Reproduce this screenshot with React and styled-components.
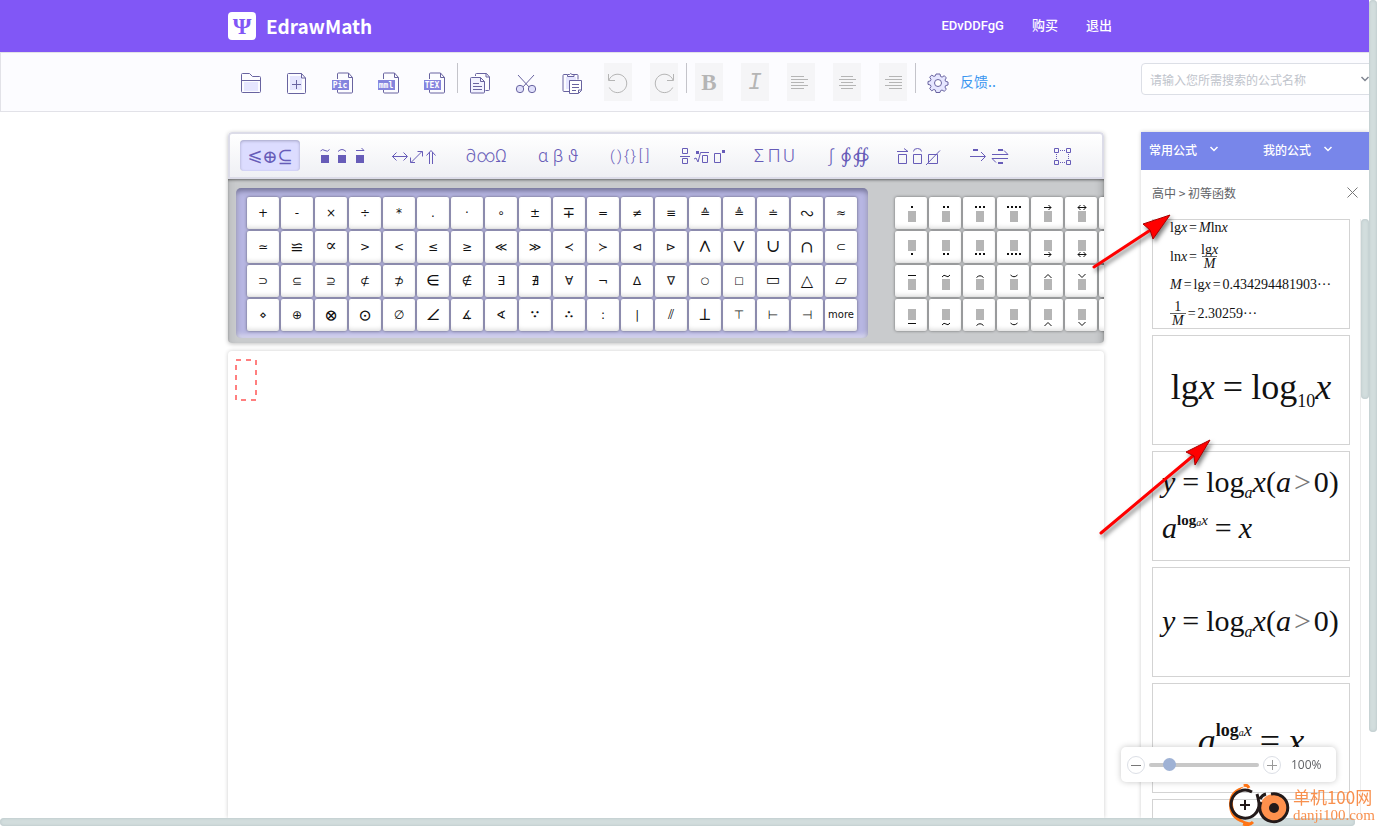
import React, { useState } from "react";
import styled, { createGlobalStyle, css } from "styled-components";

const GlobalStyle = createGlobalStyle`
  * {
    box-sizing: border-box;
  }
  body {
    margin: 0;
    background: #fff;
    color: #606266;
    font-family: "Noto Sans CJK SC", sans-serif;
    font-size: 12px;
  }
  button {
    margin: 0;
    padding: 0;
    border: none;
    background: none;
    font: inherit;
    color: inherit;
    cursor: pointer;
  }
  svg {
    display: block;
    flex: none;
  }
`;

const Frame = styled.div`
  position: relative;
  display: grid;
  grid-template-columns: minmax(0, 1fr) 8px;
  grid-template-rows: minmax(0, 1fr) 8px;
  height: 100vh;
  overflow: hidden;
`;

const Page = styled.div`
  display: flex;
  flex-direction: column;
  overflow: hidden;
`;

const ScrollThumb = styled.div`
  border-radius: 4px;
  background: #d2dddd;
  box-shadow: inset 0 0 3px #b4c0c4;
  width: ${({ $width }) => $width || "8px"};
  height: ${({ $height }) => $height || "8px"};
`;

const Header = styled.header`
  display: flex;
  align-items: center;
  flex: none;
  height: 52px;
  padding: 0 257px 0 228px;
  background: #8157f6;
  color: #fff;
`;

const Logo = styled.div`
  display: flex;
  align-items: center;
  gap: 10px;
  font-size: 19px;
  font-weight: 700;
  line-height: 28px;

  span {
    width: 28px;
    height: 28px;
    border-radius: 4px;
    background: #fff;
    color: #8157f6;
    font-family: "Liberation Serif", serif;
    font-size: 24px;
    text-align: center;
  }
`;

const Nav = styled.nav`
  display: flex;
  gap: 28px;
  margin-left: auto;

  a {
    color: #fff;
    font-family: Roboto, "Noto Sans CJK SC", sans-serif;
    font-size: 13px;
    font-weight: 500;
    line-height: 20px;
    text-decoration: none;
  }
`;

const columns = css`
  display: grid;
  grid-template-columns: minmax(0, 1fr) 228px;
  column-gap: 37px;
`;

const Toolbar = styled.div`
  ${columns}
  flex: none;
  height: 60px;
  padding: 10px 0 0 227px;
  border: 1px solid #e2e2e8;
  border-right: none;
  background: #fcfcff;
`;

const Tools = styled.div`
  display: flex;
  padding-left: 9px;
`;

const ToolGroup = styled.div`
  display: flex;
  gap: 18px;

  & + & {
    margin-left: 8px;
    padding-left: 8px;
    border-left: 1px solid #c4c4ca;
    height: 30px;
  }
`;

const ToolButton = styled.button`
  display: flex;
  align-items: center;
  justify-content: center;
  width: 28px;
  height: 38px;
  padding-top: 2px;
  color: ${({ disabled }) => (disabled ? "#b5b5b5" : "#6863a0")};
  background: ${({ disabled }) => (disabled ? "#f5f5f7" : "transparent")};
`;

const Letter = styled.span`
  font-family: ${({ $mono }) => ($mono ? '"Liberation Mono", monospace' : '"Liberation Serif", serif')};
  font-size: 23px;
  font-style: ${({ $mono }) => ($mono ? "italic" : "normal")};
  font-weight: ${({ $mono }) => ($mono ? 400 : 700)};
  line-height: 36px;
`;

const Feedback = styled.a`
  margin-left: 8px;
  color: #3a96f0;
  font-size: 14px;
  line-height: 36px;
  text-decoration: none;
`;

const SearchBox = styled.div`
  display: flex;
  align-items: center;
  height: 32px;
  width: 240px;
  padding-left: 8px;
  border: 1px solid #dcdfe6;
  border-radius: 4px;
  background: #fff;
  color: #7f8490;

  input {
    width: 210px;
    padding: 0;
    border: none;
    outline: none;
    background: none;
    font: inherit;
  }
  input::placeholder {
    color: #c0c4cc;
  }
`;

const Main = styled.main`
  ${columns}
  flex: 1;
  min-height: 0;
  padding: 20px 0 0 228px;
`;

const Editor = styled.section`
  display: flex;
  flex-direction: column;
  min-height: 0;
`;

const Palette = styled.div`
  flex: none;
  border-radius: 4px;
  box-shadow: 0 1px 4px rgba(0, 0, 0, 0.25);
  overflow: hidden;
`;

const Tabs = styled.div`
  display: flex;
  gap: 12px;
  height: 47px;
  padding: 6px 10px;
  border: 2px solid #dcdce8;
  border-radius: 4px 4px 0 0;
  background: linear-gradient(#fff, #eff0f4);
`;

const Tab = styled.button`
  display: flex;
  align-items: center;
  justify-content: center;
  flex: none;
  width: 60px;
  height: 31px;
  border-radius: 4px;
  color: #675cb8;
  background: ${({ $active }) => ($active ? "#dcdcff" : "transparent")};
  box-shadow: ${({ $active }) => ($active ? "inset 0 1px 3px rgba(80, 80, 110, 0.4)" : "none")};

  span {
    display: flex;
    justify-content: center;
    width: ${({ $narrow }) => ($narrow ? "7px" : "15px")};
    font-family: Roboto, "DejaVu Math TeX Gyre", "DejaVu Sans", sans-serif;
    font-size: ${({ $narrow }) => ($narrow ? "15px" : "18px")};
    font-weight: 300;
    line-height: 32px;
  }
`;

const PaletteBody = styled.div`
  display: flex;
  gap: 27px;
  padding: 9px 0 5px 8px;
  background: #c9cbcd;
  box-shadow: inset 0 2px 3px -1px rgba(0, 0, 0, 0.5), inset -8px 0 10px -8px rgba(0, 0, 0, 0.3),
    inset 8px 0 10px -8px rgba(0, 0, 0, 0.15);
`;

const SymbolGrid = styled.div`
  display: grid;
  flex: none;
  grid-template-columns: repeat(${({ $columns }) => $columns}, 32px);
  gap: 2px;
  padding: ${({ $selected }) => ($selected ? "9px 11px 7px" : "9px 0 7px")};
  border-radius: 5px;
  background: ${({ $selected }) => ($selected ? "#b7b6e2" : "transparent")};
  box-shadow: ${({ $selected }) =>
    $selected ? "inset 0 3px 5px rgba(50, 50, 80, 0.5), inset 0 -3px 4px rgba(255, 255, 255, 0.5)" : "none"};
`;

const Cell = styled.button`
  display: flex;
  align-items: center;
  justify-content: center;
  width: 32px;
  height: 32px;
  border-radius: 2px;
  background: #fff;
  color: #111;
  box-shadow: 0 0 3px rgba(0, 0, 0, 0.5), inset 0 -4px 4px -2px rgba(0, 0, 0, 0.12);
  font-family: ${({ $size }) => ($size > 12 ? '"DejaVu Math TeX Gyre", ' : "")}"DejaVu Sans", sans-serif;
  font-size: ${({ $size }) => $size || 12}px;
  line-height: 32px;
`;

const Canvas = styled.div`
  flex: 1;
  margin-top: 8px;
  padding: 8px 7px;
  border-radius: 4px 4px 0 0;
  background: #fff;
  box-shadow: 0 0 4px rgba(0, 0, 0, 0.2);
`;

const Panel = styled.aside`
  display: flex;
  flex-direction: column;
  min-height: 0;
  background: #fff;
  box-shadow: 0 0 4px rgba(0, 0, 0, 0.2);
`;

const PanelMenus = styled.div`
  display: grid;
  grid-template-columns: 1fr 1fr;
  flex: none;
  height: 38px;
  padding-bottom: 4px;
  background: #7886ea;
  color: #fff;

  button {
    display: flex;
    align-items: center;
    gap: 12px;
    padding-left: 8px;
    font-weight: 500;
  }
`;

const Crumbs = styled.div`
  display: flex;
  align-items: center;
  justify-content: space-between;
  flex: none;
  height: 49px;
  padding: 0 11px 4px;
`;

const FormulaArea = styled.div`
  display: flex;
  justify-content: space-between;
  flex: 1;
  min-height: 0;
  padding-left: 11px;
`;

const FormulaList = styled.div`
  display: flex;
  flex-direction: column;
  gap: 6px;
  width: 198px;
  overflow: hidden;
`;

const FormulaTrack = styled.div`
  width: 8px;
  box-shadow: -1px 0 0 #ececec;
`;

const cardPadding = ({ $small, $center }) => {
  if ($small) return "0 0 0 17px";
  return $center ? "0 0 6px" : "0 0 2px 9px";
};

const FormulaCard = styled.button`
  display: flex;
  flex-direction: column;
  justify-content: center;
  align-items: ${({ $center }) => ($center ? "center" : "flex-start")};
  gap: ${({ $small }) => ($small ? "8px" : "16px")};
  flex: none;
  height: 110px;
  padding: ${cardPadding};
  border: 1px solid #d3d3d3;
  background: #fff;
  color: #111;
  overflow: hidden;
  font-family: "Liberation Serif", serif;
  font-size: ${({ $size }) => $size}px;
  line-height: 1;
  white-space: nowrap;
`;

const Line = styled.span`
  display: flex;
  align-items: center;
  padding-top: ${({ $low }) => ($low ? "12px" : "0")};
`;

const Rel = styled.span`
  margin: 0 ${({ $gap }) => $gap || 2}px;
`;

const Greater = styled.span`
  margin: 0 3px;
  color: #777;
`;

const Sub = styled.span`
  align-self: flex-end;
  font-size: ${({ $size }) => $size || 16}px;
  line-height: 8px;
`;

const Sup = styled.span`
  display: flex;
  align-self: flex-start;
  font-size: ${({ $size }) => $size}px;
  font-weight: 700;
  line-height: 14px;

  sub {
    align-self: flex-end;
    font-size: 10px;
    line-height: 8px;
  }
  i {
    font-weight: 400;
  }
`;

const Fraction = styled.span`
  display: inline-flex;
  flex-direction: column;
  align-items: center;
  line-height: 13px;

  span {
    padding: 0 2px;
  }
  span + span {
    border-top: 1px solid #666;
  }
`;

const ZoomBar = styled.div`
  position: fixed;
  right: 41px;
  bottom: 44px;
  display: flex;
  align-items: center;
  height: 35px;
  width: 215px;
  padding-left: 6px;
  border-radius: 5px;
  background: #fff;
  box-shadow: 0 0 6px rgba(0, 0, 0, 0.22);
  font-family: "Open Sans", sans-serif;

  button {
    display: flex;
    align-items: center;
    justify-content: center;
    width: 18px;
    height: 18px;
    border: 1px solid #dcdfe6;
    border-radius: 50%;
    color: #777;
  }
  input {
    appearance: none;
    width: 110px;
    height: 4px;
    margin: 0 4px;
    border-radius: 2px;
    background: #c8c8c8;
  }
  input::-webkit-slider-thumb {
    appearance: none;
    width: 13px;
    height: 13px;
    border-radius: 50%;
    background: #9fb2d5;
  }
  output {
    margin-left: 10px;
  }
`;

const Watermark = styled.div`
  position: fixed;
  right: 2px;
  bottom: 0;
  display: flex;
  align-items: center;
  gap: 2px;
  color: #f8904e;
  font-size: 17px;
  line-height: 20px;

  small {
    display: block;
    font-family: "Liberation Serif", serif;
    font-size: 15px;
    line-height: 17px;
  }
`;

const Arrows = styled.svg`
  position: absolute;
  left: 1090px;
  top: 205px;
  pointer-events: none;
  filter: drop-shadow(2px 3px 2px rgba(0, 0, 0, 0.5));
`;

const Icon = ({ size = 22, children }) => (
  <svg width={size} height={size} viewBox={`0 0 ${size} ${size}`} fill="none" stroke="currentColor">
    {children}
  </svg>
);

const FolderIcon = () => (
  <Icon>
    <path d="M4 10h14v9H4z" fill="#e6e6ff" stroke="none" />
    <path d="M1.5 2.5q0-1 1-1h7l3 3h7q1 0 1 1v14q0 1-1 1h-17q-1 0-1-1zM1.5 8.5h19" />
  </Icon>
);

const NewIcon = () => (
  <Icon>
    <path d="M4 4h12v14H4z" fill="#e6e6ff" stroke="none" />
    <path d="M2.500 1.500h13l4 4.500v14.500q0 1-1 1h-16q-1 0-1-1v-18q0-1 1-1M15.500 1.500v4.500h4M6 12.500h9M10.500 8v9" />
  </Icon>
);

const ExportIcon = ({ label }) => (
  <Icon size={22}>
    <path d="M5.500 7v-5q0-1 1-1h10l4 4.500v14.500q0 1-1 1h-13q-1 0-1-1v-3M16.500 1v4.500h4" />
    <path d="M0 8h17v10H0z" fill="#8585de" stroke="none" />
    <text
      x="8"
      y="16"
      textAnchor="middle"
      fill="#fff"
      stroke="none"
      fontFamily="DejaVu Sans Mono, monospace"
      fontSize="8"
      fontWeight="700"
    >
      {label}
    </text>
  </Icon>
);

const CopyIcon = () => (
  <Icon>
    <path d="M6.500 4v-1.500q0-1 1-1h10l3 3.500v12.500q0 1-1 1h-3M17 1.500v3.500h3.500" />
    <path d="M1.500 6.500q0-1 1-1h9l4 4v10.500q0 1-1 1h-12q-1 0-1-1z" fill="#f2f2ff" />
    <path d="M11.500 5.500v4h4M4 11.500h6M4 14.500h9M4 17.500h9" />
  </Icon>
);

const CutIcon = () => (
  <Icon>
    <path d="M3 3l11.500 12.500M19 3L7.500 15.500" />
    <circle cx="5" cy="17" r="3.700" fill="#e0e0fb" />
    <circle cx="17" cy="17" r="3.700" fill="#e0e0fb" />
  </Icon>
);

const PasteIcon = () => (
  <Icon>
    <path d="M5 5h10v12H5z" fill="#e6e6ff" stroke="none" />
    <path d="M6 2.500H3q-1 0-1 1v15q0 1 1 1h5M13 2.500h3q1 0 1 1v4" />
    <path d="M6.500 4.500v-2h2q1-2 2.500 0h2v2z" />
    <path d="M8.500 8.500h12v10l-3 3h-9z" fill="#fff" />
    <path d="M11 12.500h7M11 15.500h7M11 18.500h4M17.500 21v-3h3" />
  </Icon>
);

const TurnIcon = ({ flip }) => (
  <Icon>
    <g transform={flip ? "translate(22 0) scale(-1 1)" : undefined}>
      <path d="M1.500 2v6.500h6.500M2 8a9.200 9.200 0 1 1 .3 7.500" />
    </g>
  </Icon>
);

const AlignIcon = ({ starts, widths }) => (
  <Icon>
    {widths.map((width, i) => (
      <path key={i} d={`M${starts[i]} ${4.5 + i * 3}h${width}`} />
    ))}
  </Icon>
);

const GearIcon = () => (
  <Icon>
    <path
      fill="#e6e6ff"
      strokeLinejoin="round"
      d="M9 2h4l.6 2.500 1.500.6 2.200-1.400 2 2.200-1.300 2.100.6 1.400 2.400.6v3l-2.400.6-.6 1.500 1.300 2.200-2.100 2-2.200-1.300-1.400.6L13 20.500H9l-.6-2.400-1.500-.6-2.200 1.300-2-2.100 1.300-2.200-.6-1.500-2.400-.6V9.500l2.400-.6.600-1.500-1.300-2.200 2-2.100 2.200 1.300 1.500-.6z"
    />
    <circle cx="11" cy="11" r="3.500" fill="#fff" />
  </Icon>
);

const Chevron = () => (
  <svg width="10" height="8" viewBox="0 0 10 8" fill="none" stroke="currentColor" strokeWidth="1.500">
    <path d="M1.500 2L5 5.500 8.500 2" />
  </svg>
);

const TabDrawing = ({ children }) => (
  <svg width="48" height="20" viewBox="0 0 48 20" fill="none" stroke="currentColor">
    {children}
  </svg>
);

const TABS = [
  { name: "关系", glyphs: "⩽⊕⊆" },
  {
    name: "重音",
    drawing: (
      <>
        <path d="M3 9h8v8H3zM20 9h8v8h-8zM38 9h8v8h-8z" fill="currentColor" stroke="none" />
        <path d="M2.500 5q2-2.500 4.500-.5t4.500-1M20 5.500q4-4 8 0M38 4.500h8M43.500 2l2.500 2.500" />
      </>
    ),
  },
  {
    name: "箭头",
    drawing: (
      <path d="M2 10.500h15M6.500 6.500L2.500 10.500l4 4M13.500 6.500l4 4-4 4M21 16.500L32 5.500M25 16.500h-4.500v-5M27.500 5.500h5v5M36.500 9.500L41 4.500l4.500 5M39.500 6v12M42.500 6v12" />
    ),
  },
  { name: "杂项", glyphs: "∂∞Ω" },
  { name: "希腊字母", glyphs: "αβϑ" },
  { name: "括号", glyphs: "(){}[]" },
  {
    name: "分式根式",
    drawing: (
      <>
        <path d="M4.500 2.500h5v5h-5zM4.500 12.500h5v5h-5zM2 10.500h10M24.500 9.500h5v7h-5zM36.500 7.500h6v9h-6z" />
        <path d="M16 13l2-1 2 4 2.500-9.500H31" />
        <path d="M18 5h3v3h-3zM44 4h3v3h-3z" fill="currentColor" stroke="none" />
      </>
    ),
  },
  { name: "求和", glyphs: "ΣΠU" },
  { name: "积分", glyphs: "∫∮∯" },
  {
    name: "盒子",
    drawing: (
      <>
        <path d="M4.500 8.500h8v9h-8zM19.500 8.500h8v9h-8zM34.500 8.500h9v9h-9zM32 19L46 4.500" />
        <path d="M3 5.500h11M10 2.500l4 3M19.500 5.500q0-3 4-3t4 3" />
      </>
    ),
  },
  {
    name: "标注箭头",
    drawing: (
      <>
        <path d="M4 10.500h15M15 6l4.500 4.500L15 15M26 8.500h16l-4-4M42 12.500H26l4 4" />
        <path d="M7 3h5v2H7zM32 3h5v2h-5zM32 16h5v2h-5z" fill="currentColor" stroke="none" />
      </>
    ),
  },
  {
    name: "矩阵",
    drawing: (
      <>
        <path d="M16.500 2.500h4v4h-4zM28.500 2.500h4v4h-4zM16.500 14.500h4v4h-4zM28.500 14.500h4v4h-4z" />
        <path d="M22 4.500h6M22 16.500h6M18.500 8v6M30.500 8v6" strokeDasharray="1 1" />
      </>
    ),
  },
];

const SYMBOLS = [
  "+ - × ÷ * . · ∘ ± ∓ = ≠ ≡ ≙ ≜ ≐ ∾ ≈",
  "≃ ≌ ∝ > < ≤ ≥ ≪ ≫ ≺ ≻ ⊲ ⊳ ∧ ∨ ∪ ∩ ⊂",
  "⊃ ⊆ ⊇ ⊄ ⊅ ∈ ∉ ∃ ∄ ∀ ¬ ∆ ∇ ○ □ ▭ △ ▱",
  "⋄ ⊕ ⊗ ⊙ ∅ ∠ ∡ ∢ ∵ ∴ : ∣ ⫽ ⊥ ⊤ ⊢ ⊣ more",
].flatMap((row) => row.split(" "));

const SIZES = {
  more: 10,
  "∓": 15,
  "∾": 16,
  "≌": 16,
  "∝": 17,
  "∧": 17,
  "∨": 17,
  "∪": 17,
  "∩": 16,
  "∈": 17,
  "⊗": 16,
  "⊙": 16,
  "∠": 16,
  "∵": 17,
  "∴": 17,
  "⊥": 16,
  "△": 16,
  "▱": 15,
  "▭": 15,
  "⫽": 14,
  "○": 10,
  "□": 10,
};

const dots = (n) => Array.from({ length: n }, (_, i) => `M${18 - n * 2 + i * 4} 0h2v2h-2z`).join("");

const MARKS = [
  { dots: 1 },
  { dots: 2 },
  { dots: 3 },
  { dots: 4 },
  { line: "M13 1.500h7M17.500-1l2.500 2.500-2.500 2.500" },
  { line: "M13 1.500h8M15.500-1L13 1.500l2.500 2.500M18.500-1L21 1.500 18.500 4" },
  { line: "M13 1.500h8" },
];

const HATS = [
  { line: "M13 .5h8" },
  { line: "M13 2q2-3 4-1t4-1" },
  { line: "M13.500 2.500q3.500-3.500 7 0" },
  { line: "M13.500 0q3.500 3.500 7 0" },
  { line: "M13.500 3L17-.5 20.500 3" },
  { line: "M13.500-1L17 2.500 20.500-1" },
  { line: "M13 2.500h8" },
];

const ACCENTS = [
  { marks: MARKS, box: 14, at: 9 },
  { marks: MARKS, box: 9, at: 22 },
  { marks: HATS, box: 14, at: 10 },
  { marks: HATS, box: 10, at: 24 },
];

const ZOOM_STEP = 10;

const Log = () => (
  <>
    log<Sub><i>a</i></Sub>
  </>
);

const LogDomain = () => (
  <Line>
    <i>y</i>
    <Rel $gap={7}>=</Rel>
    <Log />
    <i>x</i>(<i>a</i><Greater>&gt;</Greater>0)
  </Line>
);

const LogPower = ({ low, gap = 7, sup = 15 }) => (
  <Line $low={low}>
    <i>a</i>
    <Sup $size={sup}>
      log<sub><i>a</i></sub>
      <i>x</i>
    </Sup>
    <Rel $gap={gap}>=</Rel>
    <i>x</i>
  </Line>
);

function Formulas() {
  return (
    <FormulaList>
      <FormulaCard $size={14} $small>
        <Line>lg<i>x</i><Rel>=</Rel><i>M</i>ln<i>x</i></Line>
        <Line>
          ln<i>x</i><Rel>=</Rel>
          <Fraction><span>lg<i>x</i></span><span><i>M</i></span></Fraction>
        </Line>
        <Line><i>M</i><Rel>=</Rel>lg<i>x</i><Rel>=</Rel>0.434294481903···</Line>
        <Line>
          <Fraction><span>1</span><span><i>M</i></span></Fraction>
          <Rel>=</Rel>2.30259···
        </Line>
      </FormulaCard>
      <FormulaCard $size={36} $center>
        <Line>lg<i>x</i><Rel $gap={8}>=</Rel>log<Sub $size={18}>10</Sub><i>x</i></Line>
      </FormulaCard>
      <FormulaCard $size={30}>
        <LogDomain />
        <LogPower />
      </FormulaCard>
      <FormulaCard $size={30}>
        <LogDomain />
      </FormulaCard>
      <FormulaCard $size={36} $center>
        <LogPower low gap={8} sup={18} />
      </FormulaCard>
      <FormulaCard $size={30} $center />
    </FormulaList>
  );
}

export default function App() {
  const [tab, setTab] = useState(0);
  const [zoom, setZoom] = useState(100);

  return (
    <Frame>
      <GlobalStyle />
      <Page>
        <Header>
          <Logo><span>Ψ</span>EdrawMath</Logo>
          <Nav>
            <a href="#user">EDvDDFgG</a>
            <a href="#buy">购买</a>
            <a href="#logout">退出</a>
          </Nav>
        </Header>

        <Toolbar>
          <Tools>
            <ToolGroup>
              <ToolButton aria-label="打开"><FolderIcon /></ToolButton>
              <ToolButton aria-label="新建"><NewIcon /></ToolButton>
              <ToolButton aria-label="导出图片"><ExportIcon label="Pic" /></ToolButton>
              <ToolButton aria-label="导出 MathML"><ExportIcon label="mml" /></ToolButton>
              <ToolButton aria-label="导出 TeX"><ExportIcon label="TEX" /></ToolButton>
            </ToolGroup>
            <ToolGroup>
              <ToolButton aria-label="复制"><CopyIcon /></ToolButton>
              <ToolButton aria-label="剪切"><CutIcon /></ToolButton>
              <ToolButton aria-label="粘贴"><PasteIcon /></ToolButton>
              <ToolButton aria-label="撤销" disabled><TurnIcon /></ToolButton>
              <ToolButton aria-label="重做" disabled><TurnIcon flip /></ToolButton>
            </ToolGroup>
            <ToolGroup>
              <ToolButton aria-label="粗体" disabled><Letter>B</Letter></ToolButton>
              <ToolButton aria-label="斜体" disabled><Letter $mono>I</Letter></ToolButton>
              <ToolButton aria-label="左对齐" disabled>
                <AlignIcon starts={[1, 1, 1, 1, 1]} widths={[13, 17, 13, 17, 13]} />
              </ToolButton>
              <ToolButton aria-label="居中" disabled>
                <AlignIcon starts={[5, 3, 5, 3, 5]} widths={[12, 17, 12, 17, 12]} />
              </ToolButton>
              <ToolButton aria-label="右对齐" disabled>
                <AlignIcon starts={[7, 3, 7, 3, 7]} widths={[13, 17, 13, 17, 13]} />
              </ToolButton>
            </ToolGroup>
            <ToolGroup>
              <ToolButton aria-label="设置"><GearIcon /></ToolButton>
            </ToolGroup>
            <Feedback href="#feedback">反馈..</Feedback>
          </Tools>
          <SearchBox>
            <input type="text" aria-label="搜索公式" placeholder="请输入您所需搜索的公式名称" />
            <Chevron />
          </SearchBox>
        </Toolbar>

        <Main>
          <Editor>
            <Palette>
              <Tabs>
                {TABS.map(({ name, glyphs, drawing }, i) => (
                  <Tab
                    key={name}
                    aria-label={name}
                    $active={i === tab}
                    $narrow={glyphs && glyphs.length > 3}
                    onClick={() => setTab(i)}
                  >
                    {glyphs ? [...glyphs].map((glyph) => <span key={glyph}>{glyph}</span>) : <TabDrawing>{drawing}</TabDrawing>}
                  </Tab>
                ))}
              </Tabs>
              <PaletteBody>
                <SymbolGrid $columns={18} $selected>
                  {SYMBOLS.map((symbol) => (
                    <Cell key={symbol} $size={SIZES[symbol]}>{symbol}</Cell>
                  ))}
                </SymbolGrid>
                <SymbolGrid $columns={7}>
                  {ACCENTS.map(({ marks, box, at }, row) =>
                    marks.map((mark, i) => (
                      <Cell key={`${row}-${i}`} aria-label="重音符号">
                        <svg width="32" height="32" fill="none" stroke="#111">
                          <rect x="13" y={box} width="8" height="11" fill="#b5b5b5" stroke="none" />
                          <g transform={`translate(0 ${at})`}>
                            {mark.dots ? <path d={dots(mark.dots)} fill="#111" stroke="none" /> : <path d={mark.line} />}
                          </g>
                        </svg>
                      </Cell>
                    ))
                  )}
                </SymbolGrid>
              </PaletteBody>
            </Palette>
            <Canvas>
              <svg width="22" height="42" fill="none" stroke="#ff7f7f" strokeWidth="2">
                <rect x="1" y="1" width="20" height="40" strokeDasharray="5" />
              </svg>
            </Canvas>
          </Editor>

          <Panel>
            <PanelMenus>
              <button>常用公式 <Chevron /></button>
              <button>我的公式 <Chevron /></button>
            </PanelMenus>
            <Crumbs>
              <span>高中 &gt; 初等函数</span>
              <button aria-label="关闭">
                <svg width="11" height="11" stroke="#777"><path d="M.5.5l10 10M10.500.5l-10 10" /></svg>
              </button>
            </Crumbs>
            <FormulaArea>
              <Formulas />
              <FormulaTrack><ScrollThumb $height="180px" /></FormulaTrack>
            </FormulaArea>
          </Panel>
        </Main>
      </Page>
      <ScrollThumb $height="89.5%" />
      <ScrollThumb $width="99%" />

      <ZoomBar>
        <button aria-label="缩小" onClick={() => setZoom(zoom - ZOOM_STEP)}>
          <svg width="10" height="10" stroke="currentColor"><path d="M0 5.500h10" /></svg>
        </button>
        <input
          type="range"
          aria-label="缩放"
          min="50"
          max="400"
          value={zoom}
          onChange={(e) => setZoom(Number(e.target.value))}
        />
        <button aria-label="放大" onClick={() => setZoom(zoom + ZOOM_STEP)}>
          <svg width="10" height="10" stroke="#999"><path d="M0 5.500h10M5.500 0v10" /></svg>
        </button>
        <output>{zoom}%</output>
      </ZoomBar>

      <Watermark>
        <svg width="64" height="42" viewBox="0 0 64 42" fill="none">
          <path d="M19 2Q2 5 2 20t14 19q6 2 10 0Q8 37 6 21 5 8 19 2" fill="#ff7414" />
          <path d="M17 2q3-2 5 2M16 40q6 2 10-2" stroke="#ff7414" strokeWidth="3" />
          <path d="M25 8A14 14 0 1 0 32 19q-1-6-2-9M33 15q2-4 6-5" stroke="#231a1a" strokeWidth="3" />
          <path d="M18 16v10M13 21h10" stroke="#231a1a" strokeWidth="2" />
          <circle cx="47" cy="24" r="14" fill="#ff914d" />
          <path d="M44 10a14 14 0 1 1-10 8" stroke="#231a1a" strokeWidth="3" />
          <circle cx="47" cy="24" r="5" fill="#231a1a" />
        </svg>
        <div>单机100网<small>danji100.com</small></div>
      </Watermark>

      <Arrows width="130" height="340" fill="#f00" stroke="none">
        <path d="M4 62L62 24" stroke="#f00" strokeWidth="3" strokeLinecap="round" />
        <path d="M80 10L53 19l7 6 3 9z" stroke="#a00" />
        <path d="M11 328L104 250" stroke="#f00" strokeWidth="3" strokeLinecap="round" />
        <path d="M120 235L96 247l8 4 1 9z" stroke="#a00" />
      </Arrows>
    </Frame>
  );
}
